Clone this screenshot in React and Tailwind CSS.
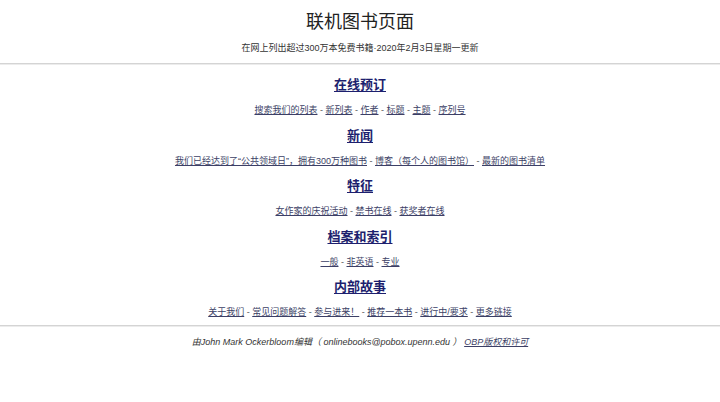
const sections = [
  {
    title: "在线预订",
    links: ["搜索我们的列表", "新列表", "作者", "标题", "主题", "序列号"],
  },
  {
    title: "新闻",
    links: ["我们已经达到了“公共领域日”，拥有300万种图书", "博客（每个人的图书馆）", "最新的图书清单"],
  },
  {
    title: "特征",
    links: ["女作家的庆祝活动", "禁书在线", "获奖者在线"],
  },
  {
    title: "档案和索引",
    links: ["一般", "非英语", "专业"],
  },
  {
    title: "内部故事",
    links: ["关于我们", "常见问题解答", "参与进来！", "推荐一本书", "进行中/要求", "更多链接"],
  },
];

export default function App() {
  return (
    <div
      className="w-[720px] h-[402px] bg-white text-center overflow-hidden"
      style={{ fontFamily: '"Liberation Sans", "Noto Sans CJK SC", sans-serif' }}
    >
      <h1
        className="pt-[10px] text-[18px] leading-[24px] text-[#222]"
        style={{ fontFamily: '"Liberation Serif", "Noto Sans CJK SC", serif' }}
      >
        联机图书页面
      </h1>
      <p className="mt-[8px] text-[9px] leading-[12px] text-[#333]">
        在网上列出超过300万本免费书籍·2020年2月3日星期一更新
      </p>
      <div className="mt-[9px] h-[2px] border-t border-[#d4d4d4] border-b border-b-[#ececec]" />

      <div className="mt-[11px] flex flex-col gap-[10.5px]">
        {sections.map((s) => (
          <div key={s.title} className="flex flex-col gap-[10px]">
            <h2 className="text-[13px] leading-[18px] font-bold text-[#1d1f6e] underline underline-offset-2">
              {s.title}
            </h2>
            <p className="text-[9px] leading-[12px] text-[#555]">
              {s.links.map((l, i) => (
                <span key={l}>
                  {i > 0 && " - "}
                  <a href="#" className="text-[#3c3f66] underline">
                    {l}
                  </a>
                </span>
              ))}
            </p>
          </div>
        ))}
      </div>

      <div className="mt-[7px] h-[2px] border-t border-[#d4d4d4] border-b border-b-[#ececec]" />
      <p className="mt-[9px] text-[9px] leading-[12px] italic text-[#333]">
        由John Mark Ockerbloom编辑（ onlinebooks@pobox.upenn.edu ）{" "}
        <a href="#" className="text-[#3c3f66] underline">
          OBP版权和许可
        </a>
      </p>
    </div>
  );
}
